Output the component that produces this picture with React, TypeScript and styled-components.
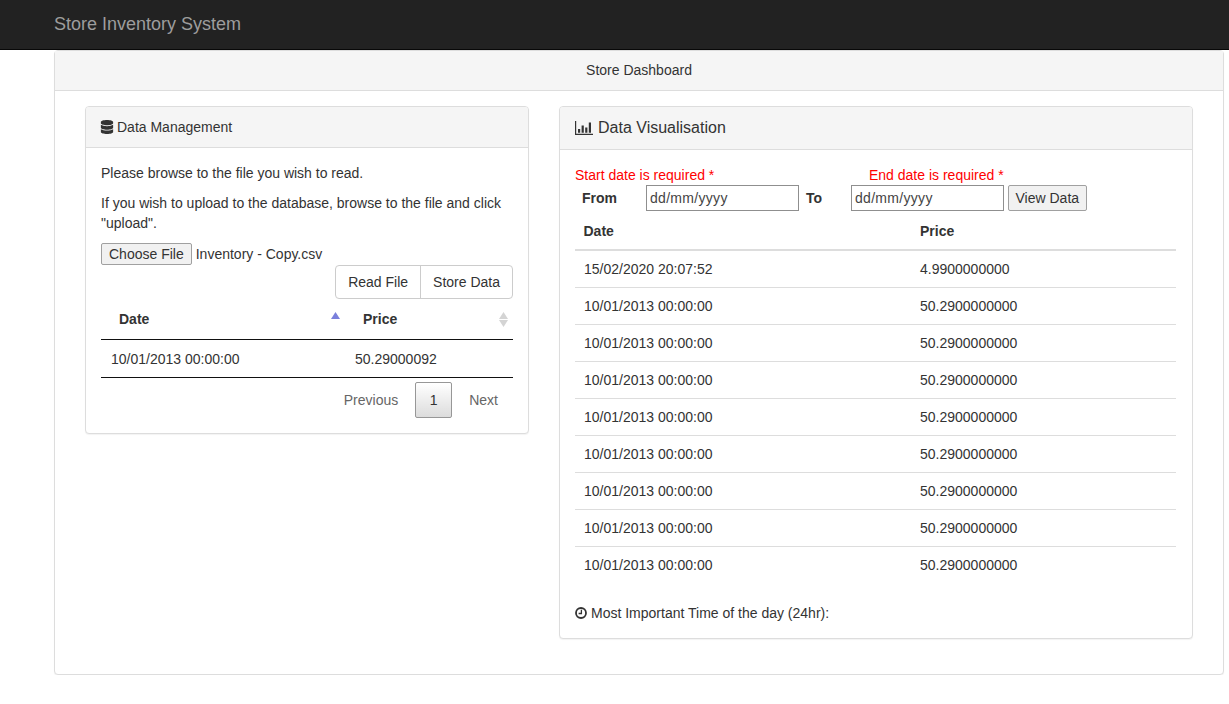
import React from "react";
import styled, { createGlobalStyle } from "styled-components";
import { FaDatabase } from "react-icons/fa";

const Global = createGlobalStyle`
  * { box-sizing: border-box; }
  body {
    margin: 0;
    background: #fff;
    color: #333;
    font-family: "Liberation Sans", Arial, sans-serif;
    font-size: 14px;
    line-height: 20px;
  }
`;

const Navbar = styled.nav`
  height: 50px;
  background: #222;
  border-bottom: 1px solid #080808;
  display: flex;
  align-items: center;
  padding: 0 0 2px 54px;
`;
const Brand = styled.a`
  color: #9d9d9d;
  font-size: 18px;
  line-height: 20px;
`;
const Page = styled.main`
  padding: 0 5px 0 54px;
`;
const Panel = styled.section`
  background: #fff;
  border: 1px solid #ddd;
  border-radius: 4px;
  box-shadow: 0 1px 1px rgba(0, 0, 0, 0.05);
  min-width: 0;
`;
const OuterHeading = styled.header`
  background: #f5f5f5;
  border-bottom: 1px solid #ddd;
  padding: 9px 15px;
  text-align: center;
  height: 40px;
`;
const OuterBody = styled.div`
  padding: 15px 30px 35px 30px;
  display: grid;
  grid-template-columns: 444px 634px;
  column-gap: 30px;
  align-items: start;
`;
const Heading = styled.header<{ $large?: boolean }>`
  background: #f5f5f5;
  border-bottom: 1px solid #ddd;
  border-radius: 3px 3px 0 0;
  padding: 10px 15px;
  height: ${(p) => (p.$large ? "43px" : "41px")};
  font-size: ${(p) => (p.$large ? "16px" : "14px")};
  line-height: ${(p) => (p.$large ? "22px" : "20px")};
  display: flex;
  align-items: center;
  gap: ${(p) => (p.$large ? "5px" : "3px")};
`;
const DatabaseIcon = styled(FaDatabase)`
  margin-left: -1px;
`;
const Body = styled.div`
  padding: 15px;
`;
const Para = styled.p`
  margin: 0 0 10px;
`;
const FileRow = styled.div`
  height: 22px;
  display: flex;
  align-items: center;
  gap: 4px;
`;
const NativeButton = styled.button<{ $tall?: boolean }>`
  font: inherit;
  color: #333;
  background: #f1f1f1;
  border: 1px solid #a0a0a0;
  border-radius: 2px;
  padding: 0 ${(p) => (p.$tall ? "6.5px" : "7px")};
  height: ${(p) => (p.$tall ? "26px" : "22px")};
  line-height: 18px;
`;
const ActionRow = styled.div`
  display: flex;
  justify-content: flex-end;
`;
const Group = styled.div`
  display: flex;
  height: 34px;
  border: 1px solid #ccc;
  border-radius: 4px;
  background: #fff;
`;
const GroupButton = styled.button`
  font: inherit;
  color: #333;
  background: transparent;
  border: 0;
  padding: 0 12px;
  & + & {
    border-left: 1px solid #ccc;
  }
`;
const DataTable = styled.table`
  width: 100%;
  border-collapse: separate;
  border-spacing: 0;
  table-layout: fixed;
`;
const SortHead = styled.th`
  position: relative;
  text-align: left;
  padding: 10px 18px;
  height: 41px;
  border-bottom: 1px solid #111;
  font-weight: bold;
`;
const SortCell = styled.td`
  padding: 9px 10px 8px;
  height: 38px;
  border-bottom: 1px solid #111;
  vertical-align: top;
`;
const SortMark = styled.span`
  position: absolute;
  right: 5px;
  top: 13px;
  width: 9px;
  height: 15px;
  display: flex;
`;
const SortPair = styled(SortMark)`
  flex-direction: column;
  gap: 1px;
`;
const Pager = styled.div`
  display: flex;
  justify-content: flex-end;
  gap: 2px;
  padding-top: 4px;
`;
const PageLink = styled.span`
  color: #666;
  padding: 8px 15px;
  height: 36px;
  line-height: 20px;
`;
const PageCurrent = styled.span`
  width: 37px;
  height: 36px;
  line-height: 34px;
  text-align: center;
  border: 1px solid #979797;
  border-radius: 2px;
  background: linear-gradient(to bottom, #fff 0%, #dcdcdc 100%);
`;
const RequiredRow = styled.div`
  display: grid;
  grid-template-columns: 294px auto;
  color: #f00;
  height: 20px;
`;
const DateRow = styled.div`
  display: flex;
  align-items: center;
  height: 26px;
`;
const DateLabel = styled.label<{ $w: number }>`
  width: ${(p) => p.$w}px;
  padding-left: 7px;
  font-weight: bold;
`;
const DateInput = styled.input<{ $tight?: boolean }>`
  width: 153px;
  height: 26px;
  font: inherit;
  border: 1px solid #8f8f8f;
  border-radius: 0;
  padding: 1px 3px;
  color: #333;
  margin-right: ${(p) => (p.$tight ? "0" : "4px")};
  letter-spacing: 0.3px;
  &::placeholder {
    color: #444;
    opacity: 1;
  }
`;
const GridTable = styled.table`
  width: 601px;
  margin: 1px 0 19px;
  border-collapse: collapse;
  table-layout: fixed;
`;
const GridCol = styled.col<{ $w?: number }>`
  width: ${(p) => (p.$w ? `${p.$w}px` : "auto")};
`;
const GridHead = styled.th`
  text-align: left;
  padding: 8px 9px;
  height: 38px;
  border-bottom: 2px solid #ddd;
  font-weight: bold;
  &:first-child {
    padding-left: 8.5px;
  }
`;
const GridCell = styled.td`
  padding: 8px 9px;
  height: 37px;
  border-top: 1px solid #ddd;
  vertical-align: top;
`;
const TimeLine = styled.div`
  display: flex;
  align-items: center;
  gap: 4px;
`;
const TriangleSvg = styled.svg`
  display: block;
`;

const Triangle = ({ color, down }: { color: string; down?: boolean }) => (
  <TriangleSvg width="9" height="7" viewBox="0 0 9 7">
    <polygon points={down ? "0,0 9,0 4.5,7" : "0,7 9,7 4.5,0"} fill={color} />
  </TriangleSvg>
);

const ChartIcon = () => (
  <svg width="18" height="14" viewBox="0 0 18 14" aria-hidden="true">
    <path fill="#333" d="M0 0h1.2v12.8H18V14H0z" />
    <path fill="#333" d="M3 8h2.2v3.8H3zM6.6 4.5h2.2v7.3H6.6zM10.2 6.5h2.2v5.3h-2.2zM13.8 1.5H16v10.3h-2.2z" />
  </svg>
);

const ClockIcon = () => (
  <svg width="12" height="12" viewBox="0 0 12 12" aria-hidden="true">
    <circle cx="6" cy="6" r="5" fill="none" stroke="#333" strokeWidth="1.8" />
    <path d="M6.4 2.8v3.7H3.6" fill="none" stroke="#333" strokeWidth="1.3" />
  </svg>
);

const rows = [
  ["15/02/2020 20:07:52", "4.9900000000"],
  ...Array.from({ length: 8 }, () => ["10/01/2013 00:00:00", "50.2900000000"]),
];

export default function App() {
  return (
    <>
      <Global />
      <Navbar>
        <Brand>Store Inventory System</Brand>
      </Navbar>
      <Page>
        <Panel>
          <OuterHeading>Store Dashboard</OuterHeading>
          <OuterBody>
            <Panel>
              <Heading>
                <DatabaseIcon size={14} color="#333" />
                Data Management
              </Heading>
              <Body>
                <Para>Please browse to the file you wish to read.</Para>
                <Para>If you wish to upload to the database, browse to the file and click "upload".</Para>
                <FileRow>
                  <NativeButton>Choose File</NativeButton>
                  Inventory - Copy.csv
                </FileRow>
                <ActionRow>
                  <Group>
                    <GroupButton>Read File</GroupButton>
                    <GroupButton>Store Data</GroupButton>
                  </Group>
                </ActionRow>
                <DataTable>
                  <colgroup>
                    <GridCol $w={244} />
                    <GridCol />
                  </colgroup>
                  <thead>
                    <tr>
                      <SortHead>
                        Date
                        <SortMark>
                          <Triangle color="#7a80dc" />
                        </SortMark>
                      </SortHead>
                      <SortHead>
                        Price
                        <SortPair>
                          <Triangle color="#d4d4d4" />
                          <Triangle color="#d4d4d4" down />
                        </SortPair>
                      </SortHead>
                    </tr>
                  </thead>
                  <tbody>
                    <tr>
                      <SortCell>10/01/2013 00:00:00</SortCell>
                      <SortCell>50.29000092</SortCell>
                    </tr>
                  </tbody>
                </DataTable>
                <Pager>
                  <PageLink>Previous</PageLink>
                  <PageCurrent>1</PageCurrent>
                  <PageLink>Next</PageLink>
                </Pager>
              </Body>
            </Panel>
            <Panel>
              <Heading $large>
                <ChartIcon />
                Data Visualisation
              </Heading>
              <Body>
                <RequiredRow>
                  <span>Start date is required *</span>
                  <span>End date is required *</span>
                </RequiredRow>
                <DateRow>
                  <DateLabel $w={71}>From</DateLabel>
                  <DateInput $tight placeholder="dd/mm/yyyy" />
                  <DateLabel $w={52}>To</DateLabel>
                  <DateInput placeholder="dd/mm/yyyy" />
                  <NativeButton $tall>View Data</NativeButton>
                </DateRow>
                <GridTable>
                  <colgroup>
                    <GridCol $w={336} />
                    <GridCol />
                  </colgroup>
                  <thead>
                    <tr>
                      <GridHead>Date</GridHead>
                      <GridHead>Price</GridHead>
                    </tr>
                  </thead>
                  <tbody>
                    {rows.map((r, i) => (
                      <tr key={i}>
                        <GridCell>{r[0]}</GridCell>
                        <GridCell>{r[1]}</GridCell>
                      </tr>
                    ))}
                  </tbody>
                </GridTable>
                <TimeLine>
                  <ClockIcon />
                  Most Important Time of the day (24hr):
                </TimeLine>
              </Body>
            </Panel>
          </OuterBody>
        </Panel>
      </Page>
    </>
  );
}
